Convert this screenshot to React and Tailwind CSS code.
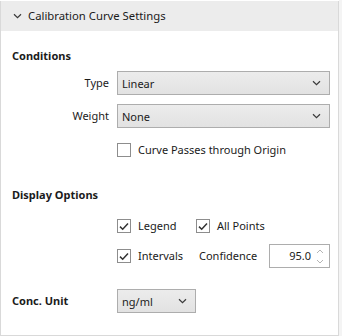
import React from "react";

const Chevron = ({ className = "" }) => (
  <svg width="9" height="6" viewBox="0 0 9 6" className={className}>
    <path d="M1 1.2 L4.5 4.6 L8 1.2" fill="none" stroke="#3a3a3a" strokeWidth="1.2" />
  </svg>
);

const Select = ({ value, w }) => (
  <div className={`h-6 ${w} border border-[#adadad] bg-gradient-to-b from-[#ececec] to-[#e2e2e2] flex items-center pl-[4px] pr-[8px] justify-between`}>
    <span className="text-[11px] text-[#1b1b1b] leading-none">{value}</span>
    <Chevron />
  </div>
);

const Check = ({ checked }) => (
  <div className="w-[14px] h-[14px] border border-[#8d8d8d] bg-white flex items-center justify-center shrink-0">
    {checked && (
      <svg width="10" height="9" viewBox="0 0 10 9">
        <path d="M1 4.6 L3.7 7.2 L9 1.5" fill="none" stroke="#333" strokeWidth="1.5" />
      </svg>
    )}
  </div>
);

export default function App() {
  return (
    <div
      className="w-[342px] h-[336px] bg-white flex text-[#1b1b1b]"
      style={{ fontFamily: '"Noto Sans", "Open Sans", sans-serif' }}
    >
      <div className="w-[339px] h-[335px] mt-px border-x border-b border-[#d9d9d9] flex flex-col">
        <div className="h-[30px] bg-[#ececec] flex items-center pl-[12px]">
          <Chevron />
          <span className="ml-[6px] text-[11.3px] leading-none">Calibration Curve Settings</span>
        </div>

        <div className="mt-[17px] h-4 flex items-center pl-[11px] text-[11px] font-bold">Conditions</div>

        <div className="mt-[7px] h-6 flex items-center">
          <span className="w-[116px] shrink-0 text-right pr-[8px] text-[11px]">Type</span>
          <Select value="Linear" w="w-[213px]" />
        </div>
        <div className="mt-[9px] h-6 flex items-center">
          <span className="w-[116px] shrink-0 text-right pr-[8px] text-[11px]">Weight</span>
          <Select value="None" w="w-[213px]" />
        </div>

        <div className="mt-[12px] h-5 flex items-center pl-[116px] gap-[7px]">
          <Check />
          <span className="text-[11px]">Curve Passes through Origin</span>
        </div>

        <div className="mt-[27px] h-4 flex items-center pl-[11px] text-[11px] font-bold">Display Options</div>

        <div className="mt-[13px] h-5 flex items-center pl-[116px]">
          <Check checked />
          <span className="ml-[7px] w-[58px] text-[11px]">Legend</span>
          <Check checked />
          <span className="ml-[7px] text-[11px]">All Points</span>
        </div>

        <div className="mt-[8px] h-6 flex items-center pl-[116px]">
          <Check checked />
          <span className="ml-[7px] w-[61px] text-[11px]">Intervals</span>
          <span className="w-[70px] text-[11px]">Confidence</span>
          <div className="h-6 w-[61px] border border-[#adadad] bg-white flex items-center justify-end pr-[5px]">
            <span className="text-[11px] mr-[5px]">95.0</span>
            <div className="flex flex-col gap-[5px]">
              <svg width="8" height="5" viewBox="0 0 8 5">
                <path d="M1 4 L4 1 L7 4" fill="none" stroke="#b5b5b5" strokeWidth="1" />
              </svg>
              <svg width="8" height="5" viewBox="0 0 8 5">
                <path d="M1 1 L4 4 L7 1" fill="none" stroke="#b5b5b5" strokeWidth="1" />
              </svg>
            </div>
          </div>
        </div>

        <div className="mt-[21px] h-6 flex items-center">
          <span className="w-[116px] shrink-0 pl-[11px] text-[11px] font-bold">Conc. Unit</span>
          <Select value="ng/ml" w="w-[79px]" />
        </div>
      </div>
      <div className="w-[3px] h-full bg-[#f4f4f4]" />
    </div>
  );
}
